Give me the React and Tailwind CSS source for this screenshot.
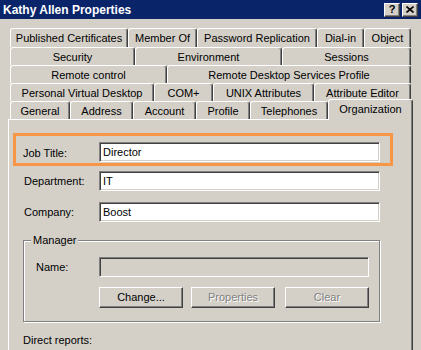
import React from "react";

const tabRows = [
  [
    ["Published Certificates", "w-[118px]"],
    ["Member Of", "w-[69px]"],
    ["Password Replication", "w-[120px]"],
    ["Dial-in", "w-[47px]"],
    ["Object", "w-[47px]"],
  ],
  [
    ["Security", "w-[125px]"],
    ["Environment", "w-[147px]"],
    ["Sessions", "w-[129px]"],
  ],
  [
    ["Remote control", "w-[157px]"],
    ["Remote Desktop Services Profile", "w-[244px]"],
  ],
  [
    ["Personal Virtual Desktop", "w-[144px]"],
    ["COM+", "w-[59px]"],
    ["UNIX Attributes", "w-[101px]"],
    ["Attribute Editor", "w-[97px]"],
  ],
];

const lastRow = [
  ["General", "w-[60px]"],
  ["Address", "w-[63px]"],
  ["Account", "w-[63px]"],
  ["Profile", "w-[54px]"],
  ["Telephones", "w-[78px]"],
];

const Tab = ({ label, w }) => (
  <div
    className={`${w} h-full shrink-0 flex items-center justify-center border-l border-t border-r border-l-white border-t-white border-r-[#404040] rounded-t-[3px] shadow-[inset_-1px_0_0_#808080] pt-[1px]`}
  >
    {label}
  </div>
);

const Field = ({ value, disabled }) => (
  <div
    className={`h-[20px] border border-t-[#808080] border-l-[#808080] border-b-white border-r-white shadow-[inset_1px_1px_0_#404040,inset_-1px_-1px_0_#d4d0c8] flex items-center pl-[3px] ${
      disabled ? "bg-[#d4d0c8] w-[270px]" : "bg-white w-[281px]"
    }`}
  >
    {value}
  </div>
);

const Button = ({ label, disabled }) => (
  <div
    className={`w-[84px] h-[21px] flex items-center justify-center border border-t-white border-l-white border-b-[#404040] border-r-[#404040] shadow-[inset_-1px_-1px_0_#808080] ${
      disabled ? "text-[#808080] [text-shadow:1px_1px_0_#ffffff]" : "text-black"
    }`}
  >
    {label}
  </div>
);

const CaptionButton = ({ children }) => (
  <div className="w-[16px] h-[14px] bg-[#d4d0c8] flex items-center justify-center border border-t-white border-l-white border-b-[#404040] border-r-[#404040] shadow-[inset_-1px_-1px_0_#808080] text-black font-bold text-[11px] leading-none">
    {children}
  </div>
);

const App = () => {
  return (
    <div className="w-[421px] h-[350px] overflow-hidden bg-[#d4d0c8] text-[11px] text-black font-['Liberation_Sans',Arial,sans-serif]">
      <div className="h-[19px] bg-[#0a246a] flex items-center justify-between pl-[3px] pr-[3px]">
        <span className="text-white font-bold text-[12px]">Kathy Allen Properties</span>
        <div className="flex gap-[2px]">
          <CaptionButton>?</CaptionButton>
          <CaptionButton>
            <svg width="8" height="7" viewBox="0 0 8 7">
              <path d="M0.5 0.5 L7.5 6.5 M7.5 0.5 L0.5 6.5" stroke="#000" strokeWidth="1.6" />
            </svg>
          </CaptionButton>
        </div>
      </div>

      <div className="pl-[10px] pt-[9px]">
        {tabRows.map((row, i) => (
          <div key={i} className={`flex ${i === 0 ? "h-[19px]" : "h-[18px]"}`}>
            {row.map(([label, w]) => (
              <Tab key={label} label={label} w={w} />
            ))}
          </div>
        ))}
        <div className="flex h-[18px] items-end">
          {lastRow.map(([label, w]) => (
            <Tab key={label} label={label} w={w} />
          ))}
          <div className="relative z-10 w-[85px] h-[21px] -mb-[1px] shrink-0 bg-[#d4d0c8] flex items-center justify-center border-l border-t border-r border-l-white border-t-white border-r-[#404040] rounded-t-[3px] shadow-[inset_-1px_0_0_#808080] pb-[2px]">
            Organization
          </div>
        </div>
      </div>

      <div className="ml-[8px] w-[405px] h-[240px] border-l border-t border-r border-l-white border-t-white border-r-[#404040] shadow-[inset_-1px_0_0_#808080]">
        <div className="ml-[4px] mt-[13px] w-[380px] h-[33px] border-[3px] border-[#f79646] flex items-start pt-[6px] pl-[7px]">
          <span className="w-[76px] pt-[3px]">Job Title:</span>
          <Field value="Director" />
        </div>

        <div className="mt-[5px] flex items-center pl-[15px]">
          <span className="w-[75px]">Department:</span>
          <Field value="IT" />
        </div>

        <div className="mt-[11px] flex items-center pl-[15px]">
          <span className="w-[75px]">Company:</span>
          <Field value="Boost" />
        </div>

        <div className="relative ml-[14px] mt-[18px] w-[357px] h-[82px] border border-[#808080] shadow-[inset_1px_1px_0_#ffffff,1px_1px_0_#ffffff] pl-[12px] pt-[16px]">
          <span className="absolute left-[7px] -top-[8px] bg-[#d4d0c8] px-[2px] leading-[14px]">
            Manager
          </span>
          <div className="flex items-center">
            <span className="w-[63px]">Name:</span>
            <Field value="" disabled />
          </div>
          <div className="flex mt-[10px] ml-[63px]">
            <Button label="Change..." />
            <div className="ml-[8px]">
              <Button label="Properties" disabled />
            </div>
            <div className="ml-[10px]">
              <Button label="Clear" disabled />
            </div>
          </div>
        </div>

        <div className="mt-[10px] pl-[14px]">Direct reports:</div>
      </div>
    </div>
  );
};

export default App;
